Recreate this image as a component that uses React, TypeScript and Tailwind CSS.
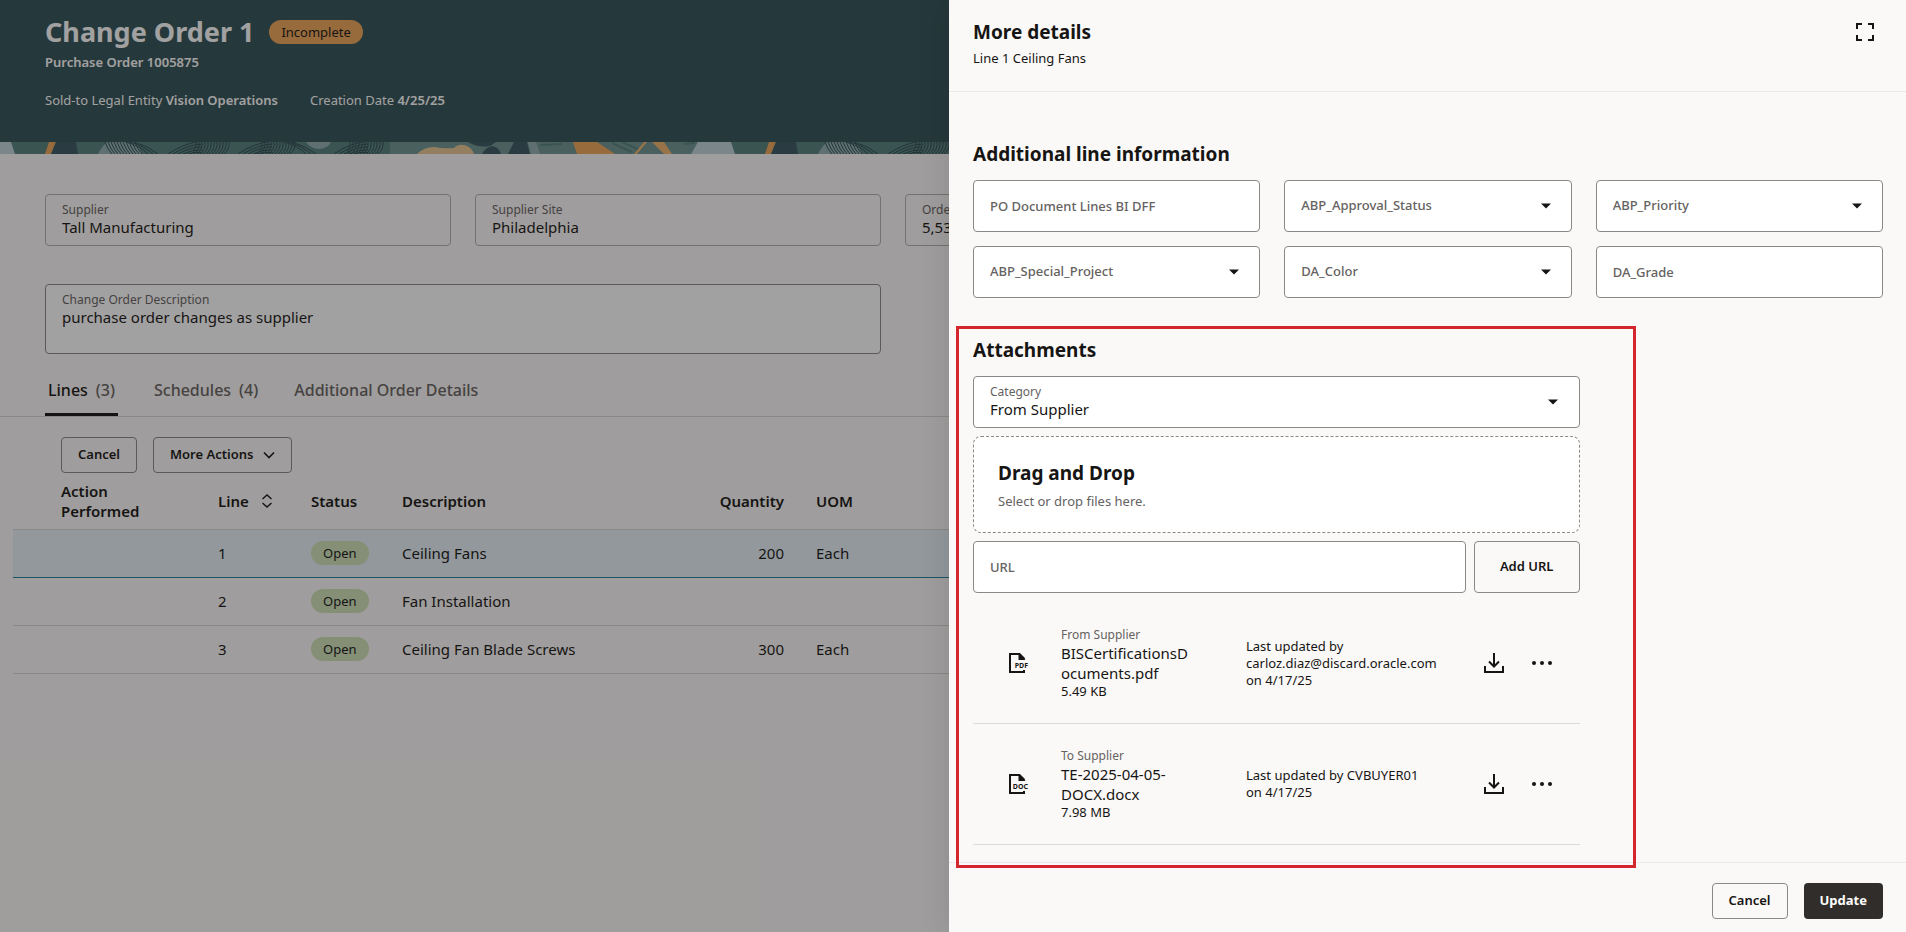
import type { ReactNode } from "react";

const lines = [
  { line: 1, description: "Ceiling Fans", quantity: "200", uom: "Each", selected: true },
  { line: 2, description: "Fan Installation", quantity: "", uom: "", selected: false },
  { line: 3, description: "Ceiling Fan Blade Screws", quantity: "300", uom: "Each", selected: false },
];

const files = [
  {
    type: "PDF",
    category: "From Supplier",
    name: "BISCertificationsDocuments.pdf",
    size: "5.49 KB",
    updated: ["Last updated by", "carloz.diaz@discard.oracle.com", "on 4/17/25"],
  },
  {
    type: "DOC",
    category: "To Supplier",
    name: "TE-2025-04-05-DOCX.docx",
    size: "7.98 MB",
    updated: ["Last updated by CVBUYER01", "on 4/17/25"],
  },
];

const range = (n: number) => Array.from({ length: n }, (_, i) => i);

function BannerStrip() {
  return (
    <svg className="block h-3 w-full" aria-hidden="true">
      <defs>
        <pattern id="strip" width="720" height="12" patternUnits="userSpaceOnUse">
          <rect width="720" height="12" fill="#527f7b" />
          <rect x="390" width="310" height="12" fill="#6b9390" />
          <path d="M0 0H11L15 12H0ZM698 0H720V12H691Z" fill="#bed2da" />
          <path d="M49 0H56L51 12H45Z" fill="#eea657" />
          <path d="M56 0H76L78 12H51Z" fill="#37585f" />
          <path d="M98 12Q102 4 107 0H136L142 12Z" fill="#91adb0" />
          <path d="M306 0H331Q328 7 318 7Q310 6 306 0Z" fill="#91adb0" />
          <g fill="none" stroke="#2b4a52" strokeWidth="1">
            {range(11).map((i) => (
              <path key={i} d={`M${105 + i * 3} 0Q${108 + i * 3} 8 ${112 + i * 3} 12`} />
            ))}
            {[168, 238, 334].map((x) =>
              range(5).map((i) => (
                <path key={`${x}-${i}`} d={`M${x + i * 5} 12Q${x + 16 + i * 3} ${1 + i * 2} ${x + 34} ${i * 3 - 1}`} />
              ))
            )}
            {[196, 262, 350].map((x) =>
              range(12).map((i) => (
                <path key={`${x}-${i}`} d={`M${x + i * 3} 0Q${x + 1 + i * 3} 7 ${x - 5 + i * 3} 12`} />
              ))
            )}
            {[134, 292].map((x) =>
              range(3).map((i) => (
                <path key={`${x}-${i}`} d={`M${x - i * 4} 0Q${x + 14 - i * 4} 4 ${x + 24 - i * 5} 12`} />
              ))
            )}
          </g>
          <path d="M468 0H496L490 4Q478 6 468 0ZM482 12Q486 5 492 4Q499 5 501 12ZM514 0H527L530 12H508Z" fill="#37585f" />
          <path d="M417 12Q424 5 434 5Q444 7 454 6Q458 2 464 3Q472 5 474 12Z" fill="#e6c791" />
          <path d="M528 0H536L540 12H531Z" fill="#91adb0" />
          <path d="M573 0H597L615 12H577Z" fill="#eea657" />
          <path d="M644 0H647L637 12H634ZM652 0H664L672 12H664Z" fill="#eeb36a" />
          <path d="M612 1L632 10M622 0L638 7M540 3L562 2M684 2L695 1" stroke="#527f7b" strokeWidth="2" />
        </pattern>
      </defs>
      <rect width="100%" height="12" fill="url(#strip)" />
    </svg>
  );
}

function Caret() {
  return (
    <svg className="pointer-events-none absolute top-1/2 right-5 -mt-1 h-2 w-3" viewBox="0 0 12 8" aria-hidden="true">
      <path d="M1 1.5H11L6 6.5Z" fill="#161513" />
    </svg>
  );
}

function TextField({ label }: { label: string }) {
  return (
    <input
      type="text"
      aria-label={label}
      placeholder={label}
      className="h-13 w-full min-w-0 rounded border border-[#8b8987] bg-white px-4 text-[13px] font-medium placeholder:text-[#65625f]"
    />
  );
}

function SelectField({ label }: { label: string }) {
  return (
    <div className="relative">
      <select
        aria-label={label}
        className="block h-13 w-full appearance-none rounded border border-[#8b8987] bg-white px-4 text-[13px] font-medium text-[#65625f]"
      >
        <option>{label}</option>
      </select>
      <Caret />
    </div>
  );
}

function ReadOnlyField({ label, value }: { label: string; value: string }) {
  return (
    <label className="block h-13 rounded border border-[#b4b2b0] px-4 pt-2">
      <span className="block text-xs leading-[14px] text-[#65625f]">{label}</span>
      <input readOnly value={value} className="block h-5 w-full text-[15px] leading-5" />
    </label>
  );
}

function OutlineButton({ children }: { children: ReactNode }) {
  return (
    <button className="flex h-9 items-center gap-2.5 rounded border border-[#8b8987] px-4 text-[13px] font-semibold">
      {children}
    </button>
  );
}

function FileIcon({ type }: { type: string }) {
  return (
    <svg className="h-5 w-5" viewBox="0 0 20 20" aria-hidden="true">
      <path d="M15 17V19H1V1H10.5L15.5 6" fill="none" stroke="#161513" strokeWidth="2" />
      <path d="M9.5 1H11L16.5 7H9.5Z" fill="#161513" />
      <text x="19" y="15" fontSize="7" fontWeight="700" textAnchor="end" fill="#161513">
        {type}
      </text>
    </svg>
  );
}

function OrderPage() {
  return (
    <main className="min-h-screen bg-[#fbf9f8]">
      <header className="h-[142px] bg-[#305055] px-[45px] pt-3 text-white">
        <div className="flex items-center gap-[15px]">
          <h1 className="text-[27px] leading-10 font-bold">Change Order 1</h1>
          <span className="h-6 rounded-full bg-[#eea657] px-3 text-[13px] leading-6 text-[#161513]">
            Incomplete
          </span>
        </div>
        <p className="text-[13px] leading-5 font-semibold">Purchase Order 1005875</p>
        <div className="mt-[18px] flex gap-8 text-[13px] leading-5">
          <p>
            Sold-to Legal Entity <b className="font-semibold">Vision Operations</b>
          </p>
          <p>
            Creation Date <b className="font-semibold">4/25/25</b>
          </p>
        </div>
      </header>
      <BannerStrip />

      <div className="grid max-w-[1786px] grid-cols-4 gap-x-6 gap-y-[38px] px-[45px] pt-10">
        <ReadOnlyField label="Supplier" value="Tall Manufacturing" />
        <ReadOnlyField label="Supplier Site" value="Philadelphia" />
        <ReadOnlyField label="Ordered" value="5,530.00 USD" />
        <ReadOnlyField label="Currency" value="US Dollar" />
        <label className="col-span-2 block rounded border border-[#8b8987] bg-white px-4 pt-2">
          <span className="block text-xs leading-[14px] text-[#65625f]">Change Order Description</span>
          <textarea
            readOnly
            value="purchase order changes as supplier"
            className="block h-[46px] w-full resize-none text-[15px] leading-5"
          />
        </label>
      </div>

      <nav className="mt-4 flex gap-9 border-b border-[#d9d7d5] px-[45px] text-base font-medium text-[#65625f]">
        <button className="flex h-[46px] gap-2 rounded-t-xs border-b-[3px] border-[#161513] px-[3px] pt-2">
          <span className="text-[#161513]">Lines</span> (3)
        </button>
        <button className="flex h-[46px] gap-2 pt-2">
          <span>Schedules</span> (4)
        </button>
        <button className="flex h-[46px] pt-2">Additional Order Details</button>
      </nav>

      <div className="flex gap-4 px-[61px] pt-5">
        <OutlineButton>Cancel</OutlineButton>
        <OutlineButton>
          More Actions
          <svg className="h-3 w-3" viewBox="0 0 12 12" fill="none" stroke="#161513" strokeWidth="1.6" aria-hidden="true">
            <path d="M1 3.5L6 8.5L11 3.5" />
          </svg>
        </OutlineButton>
      </div>

      <div className="pl-[13px]">
        <table className="w-full table-fixed text-left text-[15px]">
          <colgroup>
            <col className="w-[181px]" />
            <col className="w-[93px]" />
            <col className="w-[91px]" />
            <col className="w-[270px]" />
            <col className="w-[144px]" />
            <col />
          </colgroup>
          <thead>
            <tr className="h-14 border-b border-[#d9d7d5] leading-5">
              <th className="pl-12 font-semibold">
                Action
                <br />
                Performed
              </th>
              <th className="pl-6 font-semibold">
                <span className="flex items-center gap-3">
                  Line
                  <svg className="h-4 w-3" viewBox="0 0 12 16" fill="none" stroke="#161513" strokeWidth="1.4" aria-hidden="true">
                    <path d="M1.5 6L6 2L10.5 6M1.5 10L6 14L10.5 10" />
                  </svg>
                </span>
              </th>
              <th className="pl-6 font-semibold">Status</th>
              <th className="pl-6 font-semibold">Description</th>
              <th className="pr-2 text-right font-semibold">Quantity</th>
              <th className="pl-6 font-semibold">UOM</th>
            </tr>
          </thead>
          <tbody>
            {lines.map((row) => (
              <tr
                key={row.line}
                className={
                  row.selected
                    ? "h-12 border-b border-[#227e9e] bg-[#e4f1f7]"
                    : "h-12 border-b border-[#d9d7d5]"
                }
              >
                <td />
                <td className="pl-6">{row.line}</td>
                <td className="pl-6">
                  <span className="inline-block h-6 rounded-full bg-[#cde2b8] px-3 text-[13px] leading-6">
                    Open
                  </span>
                </td>
                <td className="pl-6">{row.description}</td>
                <td className="pr-2 text-right">{row.quantity}</td>
                <td className="pl-6">{row.uom}</td>
              </tr>
            ))}
          </tbody>
        </table>
      </div>
    </main>
  );
}

function Attachments() {
  return (
    <section className="relative mt-9 w-2/3">
      {/* highlight frame */}
      <div className="pointer-events-none absolute -top-2 -right-14 -left-[17px] z-10 h-[542px] border-3 border-[#d4262e]" />

      <h2 className="text-[19px] leading-8 font-bold">Attachments</h2>

      <div className="relative mt-2.5 h-13 rounded border border-[#8b8987] bg-white">
        <label htmlFor="category" className="block px-4 pt-2 text-xs leading-[14px] text-[#65625f]">
          Category
        </label>
        <select id="category" className="block h-5 w-full appearance-none px-4 text-[15px] leading-5">
          <option>From Supplier</option>
        </select>
        <Caret />
      </div>

      <div className="mt-2 rounded-lg border border-dashed border-[#8b8987] bg-white px-6 pt-[22px] pb-[21px]">
        <h3 className="text-[19px] leading-7 font-bold">Drag and Drop</h3>
        <p className="mt-1 text-[13px] leading-5 text-[#65625f]">Select or drop files here.</p>
      </div>

      <div className="mt-2 flex gap-2">
        <TextField label="URL" />
        <button className="h-13 w-[106px] shrink-0 rounded border border-[#8b8987] text-[13px] font-semibold">
          Add URL
        </button>
      </div>

      <ul className="mt-2.5">
        {files.map((file) => (
          <li key={file.name} className="flex h-[121px] items-center border-b border-[#dddbd9] pl-9">
            <FileIcon type={file.type} />
            <div className="ml-8 w-[132px]">
              <p className="text-xs leading-4 text-[#65625f]">{file.category}</p>
              <p className="text-[15px] leading-5 wrap-break-word">{file.name}</p>
              <p className="text-[13px] leading-4">{file.size}</p>
            </div>
            <div className="ml-[53px] flex-1 text-[13px] leading-[17px]">
              {file.updated.map((text) => (
                <p key={text} className="whitespace-nowrap">
                  {text}
                </p>
              ))}
            </div>
            <div className="mr-7 flex gap-7">
              <button aria-label="Download">
                <svg className="h-5 w-5" viewBox="0 0 20 20" fill="none" stroke="#161513" strokeWidth="2" aria-hidden="true">
                  <path d="M1 13V19H19V13M10 0V13M5 8.5L10 13.5L15 8.5" />
                </svg>
              </button>
              <button aria-label="More actions">
                <svg className="h-5 w-5" viewBox="0 0 20 20" fill="#161513" aria-hidden="true">
                  <circle cx="2" cy="10" r="2" />
                  <circle cx="10" cy="10" r="2" />
                  <circle cx="18" cy="10" r="2" />
                </svg>
              </button>
            </div>
          </li>
        ))}
      </ul>
    </section>
  );
}

function DetailsDrawer() {
  return (
    <aside className="absolute inset-y-0 right-0 flex w-[calc(50%+4px)] flex-col bg-[#fbf9f8] shadow-[0_0_32px_rgba(0,0,0,0.12)]">
      <header className="flex h-[92px] items-start justify-between border-b border-[#ebe9e8] px-6 pt-4">
        <div>
          <h2 className="text-[19px] leading-8 font-bold">More details</h2>
          <p className="text-[13px] leading-5">Line 1 Ceiling Fans</p>
        </div>
        <button aria-label="Expand" className="h-8 px-2">
          <svg className="h-[18px] w-[18px]" viewBox="0 0 18 18" fill="none" stroke="#161513" strokeWidth="2" aria-hidden="true">
            <path d="M1 6V1H6M12 1H17V6M17 12V17H12M6 17H1V12" />
          </svg>
        </button>
      </header>

      <div className="flex-1 pt-[46px] pr-[23px] pl-6">
        <h2 className="text-[19px] leading-8 font-bold">Additional line information</h2>
        <div className="mt-2.5 grid grid-cols-3 gap-x-6 gap-y-3.5">
          <TextField label="PO Document Lines BI DFF" />
          <SelectField label="ABP_Approval_Status" />
          <SelectField label="ABP_Priority" />
          <SelectField label="ABP_Special_Project" />
          <SelectField label="DA_Color" />
          <TextField label="DA_Grade" />
        </div>
        <Attachments />
      </div>

      <footer className="flex h-[70px] shrink-0 items-start justify-end gap-4 border-t border-[#ebe9e8] pt-5 pr-[23px] pl-6">
        <OutlineButton>Cancel</OutlineButton>
        <button className="h-9 rounded bg-[#312d2a] px-4 text-[13px] font-bold text-white">Update</button>
      </footer>
    </aside>
  );
}

export default function App() {
  return (
    <div className="relative min-h-screen overflow-hidden font-['Noto_Sans','Open_Sans',sans-serif] text-[#161513]">
      <OrderPage />
      <div className="absolute inset-0 bg-[#161513]/40" />
      <DetailsDrawer />
    </div>
  );
}
